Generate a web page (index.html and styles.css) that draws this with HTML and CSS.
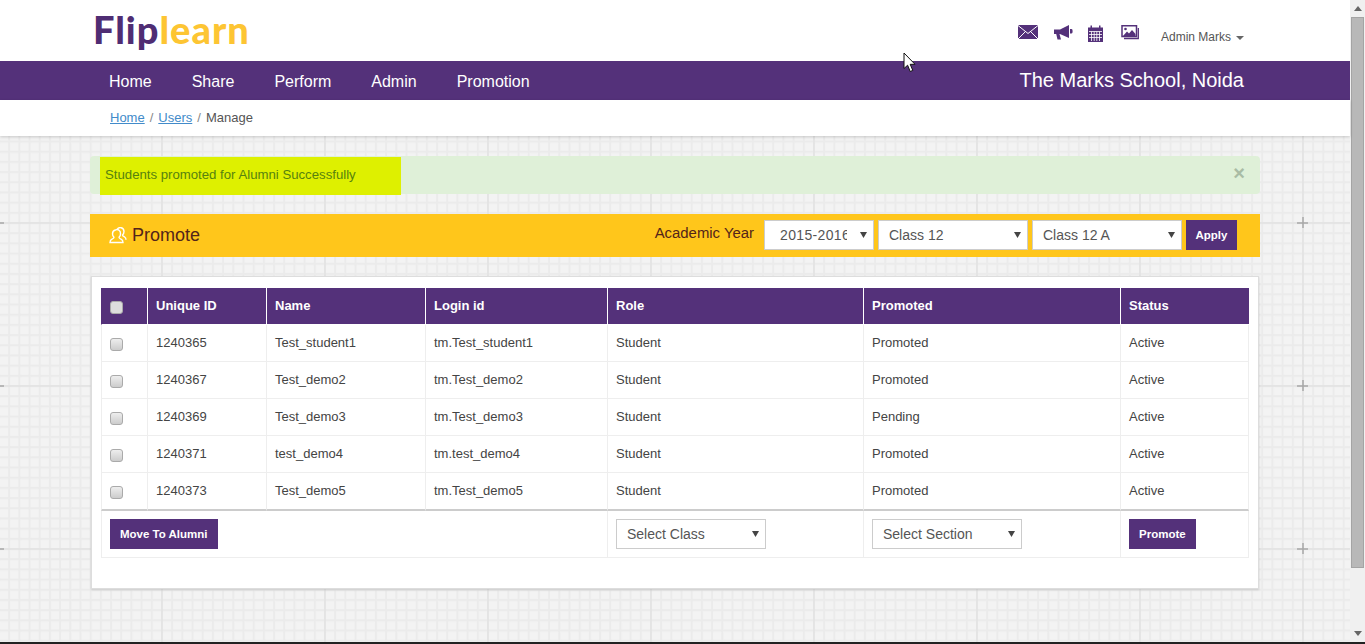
FILE: index.html
```html
<!DOCTYPE html>
<html lang="en">
<head>
	<meta charset="UTF-8">
	<title>Promote</title>
	<link rel="stylesheet" href="styles.css">
</head>
<body>
	<div class="screen">
		<div class="page">
			<header class="top">
				<div class="logo"><span class="logo-flip">Flip</span><span class="logo-learn">learn</span></div>
				<div class="top-icons">
					<svg class="ico-mail" width="20" height="14" viewBox="0 0 20 14"><rect width="20" height="14" fill="#54317a"/><path d="M0 .5L10 8.5L20 .5M0 14L7.5 6.5M20 14L12.5 6.5" fill="none" stroke="#fff" stroke-width="1"/></svg>
					<svg class="ico-horn" width="19" height="15" viewBox="0 0 19 15"><path d="M0 4.500H6L15 0V13L6 9H5.500L7 14.500H3.500L2.200 9H0zM16 4h1.500a1 2 0 0 1 0 4.500H16z" fill="#54317a"/></svg>
					<svg class="ico-cal" width="15" height="17" viewBox="0 0 15 17"><path d="M0 2.500H2.500V.5H4V2.500H11V.5H12.500V2.500H15V17H0z" fill="#54317a"/><path d="M1 6.500H14M1 9.500H14M1 12.500H14M3.500 6.500V16M6.200 6.500V16M8.800 6.500V16M11.500 6.500V16" stroke="#fff" stroke-width=".8" fill="none"/></svg>
					<svg class="ico-pic" width="18" height="15" viewBox="0 0 18 15"><path d="M1 .8H15.500V11.500H1z" fill="#fff" stroke="#54317a" stroke-width="1.500"/><path d="M17.300 3V13.500H3" fill="none" stroke="#54317a" stroke-width="1.300"/><path d="M2 11L6 6.500L8 8.500L11 5L14.500 9V11z" fill="#54317a"/><circle cx="4.500" cy="4" r="1.300" fill="#54317a"/></svg>
					<span class="user">Admin Marks<i class="caret"></i></span>
				</div>
			</header>
			<nav class="nav">
				<ul class="nav-links">
					<li>Home</li>
					<li>Share</li>
					<li>Perform</li>
					<li>Admin</li>
					<li>Promotion</li>
				</ul>
				<div class="school">The Marks School, Noida</div>
			</nav>
			<div class="crumbs">
				<a href="#">Home</a><span class="sep">/</span><a href="#">Users</a><span class="sep">/</span><span>Manage</span>
			</div>
			<div class="wrapper">
				<div class="alert">
					<div class="alert-mark">Students promoted for Alumni Successfully</div>
					<span class="alert-close">×</span>
				</div>
				<div class="bar">
					<h2 class="bar-title">
						<svg width="18" height="17" viewBox="0 0 18 17"><g fill="none" stroke="#fff" stroke-width="1.400"><path d="M8 2.500a3.800 4 0 0 1 7 2c0 1.500-.7 2.800-1.500 3.500c0 1 1 1.300 2 1.800c.8.4 1.500 1.200 1.500 3"/><path d="M6.500 3a3.500 4 0 0 0-3 4c0 1.500.7 2.500 1.500 3.200c0 1-1 1.500-2 2c-1 .5-2 1.300-2 3.300h13c0-2-1-2.800-2-3.300c-1-.5-2-1-2-2c.8-.7 1.500-1.700 1.500-3.200a3.500 4 0 0 0-5-4z"/></g></svg>
						Promote
					</h2>
					<div class="bar-tools">
						<span class="bar-label">Academic Year</span>
						<select class="sel sel-year"><option>2015-2016</option></select>
						<select class="sel sel-wide"><option>Class 12</option></select>
						<select class="sel sel-wide"><option>Class 12 A</option></select>
						<button class="btn btn-apply">Apply</button>
					</div>
				</div>
				<div class="card">
					<table class="grid">
						<colgroup>
							<col class="c1"><col class="c2"><col class="c3"><col class="c4"><col class="c5"><col class="c6"><col class="c7">
						</colgroup>
						<thead>
							<tr>
								<th><input type="checkbox" class="chk chk-head"></th>
								<th>Unique ID</th>
								<th>Name</th>
								<th>Login id</th>
								<th>Role</th>
								<th>Promoted</th>
								<th>Status</th>
							</tr>
						</thead>
						<tbody>
							<tr>
								<td><input type="checkbox" class="chk"></td>
								<td>1240365</td><td>Test_student1</td><td>tm.Test_student1</td><td>Student</td><td>Promoted</td><td>Active</td>
							</tr>
							<tr>
								<td><input type="checkbox" class="chk"></td>
								<td>1240367</td><td>Test_demo2</td><td>tm.Test_demo2</td><td>Student</td><td>Promoted</td><td>Active</td>
							</tr>
							<tr>
								<td><input type="checkbox" class="chk"></td>
								<td>1240369</td><td>Test_demo3</td><td>tm.Test_demo3</td><td>Student</td><td>Pending</td><td>Active</td>
							</tr>
							<tr>
								<td><input type="checkbox" class="chk"></td>
								<td>1240371</td><td>test_demo4</td><td>tm.test_demo4</td><td>Student</td><td>Promoted</td><td>Active</td>
							</tr>
							<tr class="last">
								<td><input type="checkbox" class="chk"></td>
								<td>1240373</td><td>Test_demo5</td><td>tm.Test_demo5</td><td>Student</td><td>Promoted</td><td>Active</td>
							</tr>
						</tbody>
						<tfoot>
							<tr>
								<td colspan="4"><button class="btn">Move To Alumni</button></td>
								<td><select class="sel sel-foot"><option>Select Class</option></select></td>
								<td><select class="sel sel-foot"><option>Select Section</option></select></td>
								<td><button class="btn">Promote</button></td>
							</tr>
						</tfoot>
					</table>
				</div>
			</div>
			<svg class="pointer" width="13" height="21" viewBox="0 0 13 21"><path d="M1 1V16.500L4.600 13.200L7.200 19.500L9.800 18.400L7.200 12.300H12z" fill="#fff" stroke="#111" stroke-width="1"/></svg>
		</div>
		<div class="scroll">
			<span class="scroll-up"></span>
			<div class="scroll-thumb"></div>
			<span class="scroll-down"></span>
		</div>
	</div>
	<div class="edge"></div>
</body>
</html>
```

FILE: styles.css
```css
* {
	box-sizing: border-box;
}
html,
body {
	height: 100%;
	margin: 0;
	overflow: hidden;
}
body {
	display: flex;
	flex-direction: column;
	font-family: "Liberation Sans", Arial, sans-serif;
	font-size: 13px;
	color: #444;
}
ul,
li,
h2 {
	margin: 0;
	padding: 0;
}
li {
	list-style: none;
}
.screen {
	display: flex;
	flex: 1;
	min-height: 0;
}
.page {
	position: relative;
	flex: 1;
	min-width: 0;
	background-color: #f3f3f3;
	background-image: url("data:image/svg+xml,%3Csvg xmlns='http://www.w3.org/2000/svg' width='163' height='163'%3E%3Cdefs%3E%3Cpattern id='g' width='10.1875' height='10.1875' patternUnits='userSpaceOnUse'%3E%3Cpath d='M0 1H11M1 0V11' stroke='%23ebebeb' stroke-width='2'/%3E%3C/pattern%3E%3C/defs%3E%3Crect width='163' height='163' fill='url(%23g)'/%3E%3Cpath d='M0 1H163M1 0V163' stroke='%23e2e2e2' stroke-width='1.500'/%3E%3Cpath d='M1 -5V6M1 158V163M-5 1H6M158 1H163' stroke='%23a8a8a8' stroke-width='1.500'/%3E%3C/svg%3E");
	background-position: -2px 222px;
}

/* top */
.top {
	display: flex;
	justify-content: space-between;
	height: 61px;
	padding: 0 106px 0 93px;
	background: #fff;
}
.logo {
	margin-top: 6px;
	font-family: Lato, "Open Sans", sans-serif;
	font-size: 38px;
	font-weight: 900;
	line-height: 46px;
	letter-spacing: 1px;
}
.logo-flip {
	color: #4f2d73;
}
.logo-learn {
	color: #fdc533;
}
.top-icons {
	display: flex;
	align-items: flex-start;
	padding-top: 25px;
}
.ico-mail {
	margin-right: 16px;
}
.ico-horn {
	margin-right: 15px;
}
.ico-cal {
	margin-right: 18px;
}
.ico-pic {
	margin-right: 22px;
}
.user {
	margin-top: 5px;
	font-size: 12px;
	line-height: 14px;
	color: #555;
}
.caret {
	display: inline-block;
	margin-left: 5px;
	vertical-align: middle;
	border-top: 4px solid #666;
	border-left: 4px solid transparent;
	border-right: 4px solid transparent;
}

/* nav */
.nav {
	display: flex;
	justify-content: space-between;
	align-items: center;
	height: 39px;
	padding: 0 106px 0 89px;
	background: #54317a;
	color: #fff;
}
.nav-links {
	display: flex;
	margin-top: 2px;
}
.nav-links li {
	padding: 0 20px;
	font-size: 16px;
}
.school {
	font-size: 20px;
}
.crumbs {
	position: relative;
	height: 36px;
	padding-left: 110px;
	background: #fff;
	line-height: 35px;
	color: #555;
	box-shadow: 0 1px 3px rgba(0, 0, 0, .18);
}
.crumbs a {
	color: #428bca;
}
.sep {
	margin: 0 5px;
	color: #888;
}

/* content */
.wrapper {
	width: 1170px;
	margin: 20px auto 0;
}
.alert {
	display: flex;
	justify-content: space-between;
	height: 38px;
	background: #dff0d8;
	border-radius: 4px;
}
.alert-mark {
	width: 301px;
	height: 38px;
	margin: 1px 0 0 10px;
	padding-left: 5px;
	background: #def000;
	font-size: 13.2px;
	color: #56820f;
	line-height: 35px;
}
.alert-close {
	margin: 5px 15px 0 0;
	font-size: 20px;
	font-weight: bold;
	line-height: 24px;
	color: #a9bca5;
}
.bar {
	display: flex;
	justify-content: space-between;
	height: 43px;
	margin-top: 20px;
	padding: 6px 23px 7px 19px;
	background: #ffc61b;
}
.bar-title {
	display: flex;
	align-items: center;
	gap: 5px;
	font-size: 18px;
	font-weight: normal;
	color: #53241a;
}
.bar-tools {
	display: flex;
	gap: 4px;
}
.bar-label {
	margin-right: 6px;
	font-size: 14.9px;
	line-height: 26px;
	color: #53241a;
}
.sel {
	height: 30px;
	padding: 0 24px 0 10px;
	font-family: inherit;
	font-size: 14px;
	color: #555;
	border: 1px solid #ccc;
	border-radius: 0;
	background: #fff url("data:image/svg+xml,%3Csvg xmlns='http://www.w3.org/2000/svg' width='7' height='6'%3E%3Cpath d='M0 0H7L3.500 6z' fill='%23444'/%3E%3C/svg%3E") no-repeat right 6px center;
	appearance: none;
	-webkit-appearance: none;
}
.sel-year {
	width: 110px;
	padding: 0 26px 0 15px;
	letter-spacing: .35px;
}
.sel-wide,
.sel-foot {
	width: 150px;
}
.btn {
	height: 30px;
	padding: 0 10px;
	font-family: inherit;
	font-size: 11.5px;
	font-weight: bold;
	color: #fff;
	background: #54317a;
	border: 0;
}
.btn-apply {
	width: 51px;
	padding: 0;
}
.card {
	margin: 19px 1px 0;
	padding: 11px 9px 30px;
	background: #fff;
	border: 1px solid #ddd;
	box-shadow: 0 1px 2px rgba(0, 0, 0, .15);
}

/* table */
.grid {
	width: 1148px;
	table-layout: fixed;
	border-collapse: separate;
	border-spacing: 0;
}
.c1 { width: 46px; }
.c2 { width: 119px; }
.c3 { width: 159px; }
.c4 { width: 182px; }
.c5 { width: 256px; }
.c6 { width: 257px; }
.c7 { width: 129px; }
.grid th {
	height: 37px;
	padding: 0 8px 2px;
	text-align: left;
	color: #fff;
	background: #54317a;
	border-left: 1px solid #fff;
	border-bottom: 1px solid #fff;
}
.grid th:first-child {
	border-left-color: #54317a;
}
.grid td {
	height: 37px;
	padding: 0 8px 1px;
	border-left: 1px solid #eee;
	border-bottom: 1px solid #eee;
}
.grid td:last-child {
	border-right: 1px solid #eee;
}
.grid .last td {
	height: 38px;
	padding-bottom: 2px;
	border-bottom: 2px solid #ccc;
}
.grid tfoot td {
	height: 47px;
	padding: 0 8px;
}
.chk {
	display: block;
	width: 13px;
	height: 13px;
	margin: 4px 0 0;
	background: linear-gradient(#eee, #ccc);
	border: 1px solid #aaa;
	border-radius: 3px;
	appearance: none;
	-webkit-appearance: none;
}
.chk-head {
	margin-top: 5px;
	background: #ddd;
}

/* things over the page */
.pointer {
	position: absolute;
	top: 52px;
	left: 903px;
}
.scroll {
	display: flex;
	flex-direction: column;
	align-items: center;
	flex: 0 0 15px;
	background: #f0f0f0;
}
.scroll-up {
	margin: 6px 0 6px;
	border-bottom: 5px solid #666;
	border-left: 4px solid transparent;
	border-right: 4px solid transparent;
}
.scroll-thumb {
	width: 13px;
	height: 551px;
	background: #b8b8b8;
	border: 1px solid #a4a4a4;
}
.scroll-down {
	margin-top: 63px;
	border-top: 5px solid #666;
	border-left: 4px solid transparent;
	border-right: 4px solid transparent;
}
.edge {
	flex: 0 0 2px;
	background: #222;
}
```
